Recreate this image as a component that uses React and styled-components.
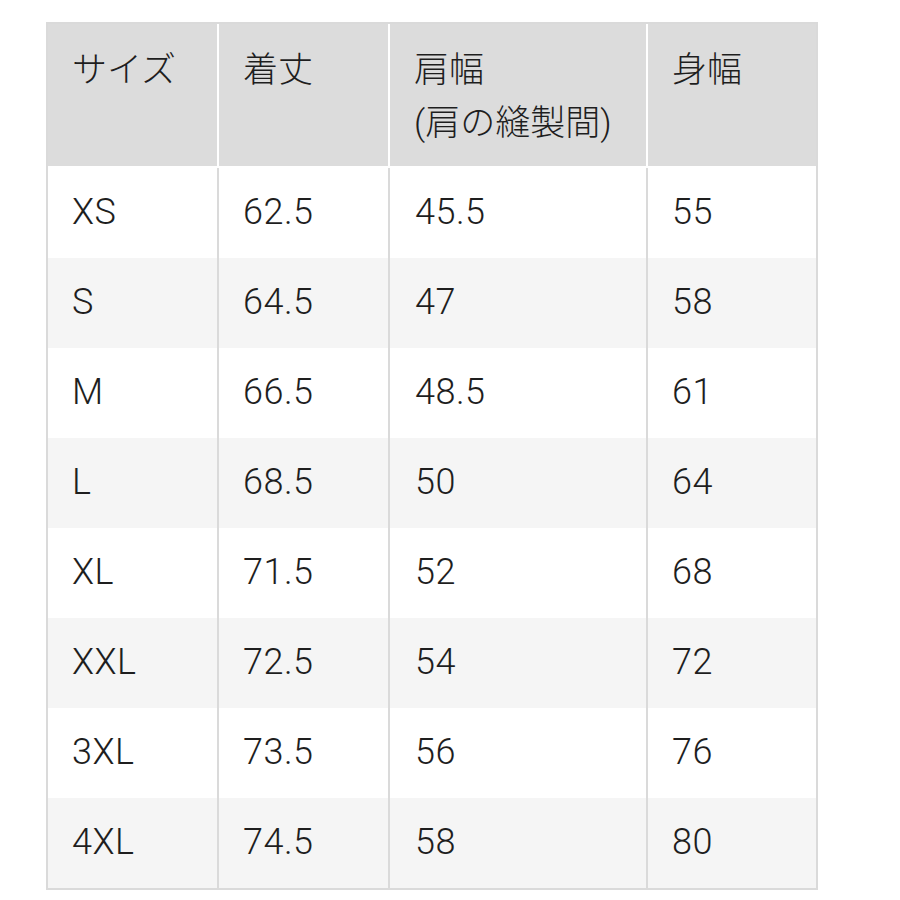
import React from "react";
import styled, { createGlobalStyle } from "styled-components";

const Global = createGlobalStyle`
  html, body { margin: 0; padding: 0; background: #fff; }
  body { font-family: Roboto, "Noto Sans CJK JP", sans-serif; font-weight: 300; color: #1e1e1e; }
`;

const Page = styled.div`
  padding: 22px 0 0 46px;
`;

const Table = styled.div`
  width: 772px;
  box-sizing: border-box;
  border: 2px solid #dadada;
`;

const cols = "169px 171px 258px 170px";

const HeadRow = styled.div`
  display: grid;
  grid-template-columns: ${cols};
  height: 144px;
  background: #dcdcdc;
  border-bottom: 2px solid #fff;
  box-sizing: border-box;
`;

const HeadCell = styled.div`
  box-sizing: border-box;
  padding: 20px 0 0 24px;
  border-left: ${(p) => (p.$first ? "none" : "2px solid #fff")};
  font-size: 35px;
  line-height: 53px;
`;

const Row = styled.div`
  display: grid;
  grid-template-columns: ${cols};
  height: 90px;
  background: ${(p) => (p.$alt ? "#f5f5f5" : "#fff")};
`;

const Cell = styled.div`
  box-sizing: border-box;
  padding-left: ${(p) => (p.$wide ? 25 : 24)}px;
  border-left: ${(p) => (p.$first ? "none" : "2px solid #dadada")};
  font-size: 36px;
  line-height: 88px;
  letter-spacing: 0.5px;
  white-space: nowrap;
`;

const headers = [
  ["サイズ"],
  ["着丈"],
  ["肩幅", "(肩の縫製間)"],
  ["身幅"],
];

const data = [
  ["XS", "62.5", "45.5", "55"],
  ["S", "64.5", "47", "58"],
  ["M", "66.5", "48.5", "61"],
  ["L", "68.5", "50", "64"],
  ["XL", "71.5", "52", "68"],
  ["XXL", "72.5", "54", "72"],
  ["3XL", "73.5", "56", "76"],
  ["4XL", "74.5", "58", "80"],
];

export default function App() {
  return (
    <>
      <Global />
      <Page>
        <Table>
          <HeadRow>
            {headers.map((lines, i) => (
              <HeadCell key={i} $first={i === 0}>
                {lines.map((l, j) => (
                  <div key={j}>{l}</div>
                ))}
              </HeadCell>
            ))}
          </HeadRow>
          {data.map((r, i) => (
            <Row key={i} $alt={i % 2 === 1}>
              {r.map((v, j) => (
                <Cell key={j} $first={j === 0} $wide={j === 2}>
                  {v}
                </Cell>
              ))}
            </Row>
          ))}
        </Table>
      </Page>
    </>
  );
}
